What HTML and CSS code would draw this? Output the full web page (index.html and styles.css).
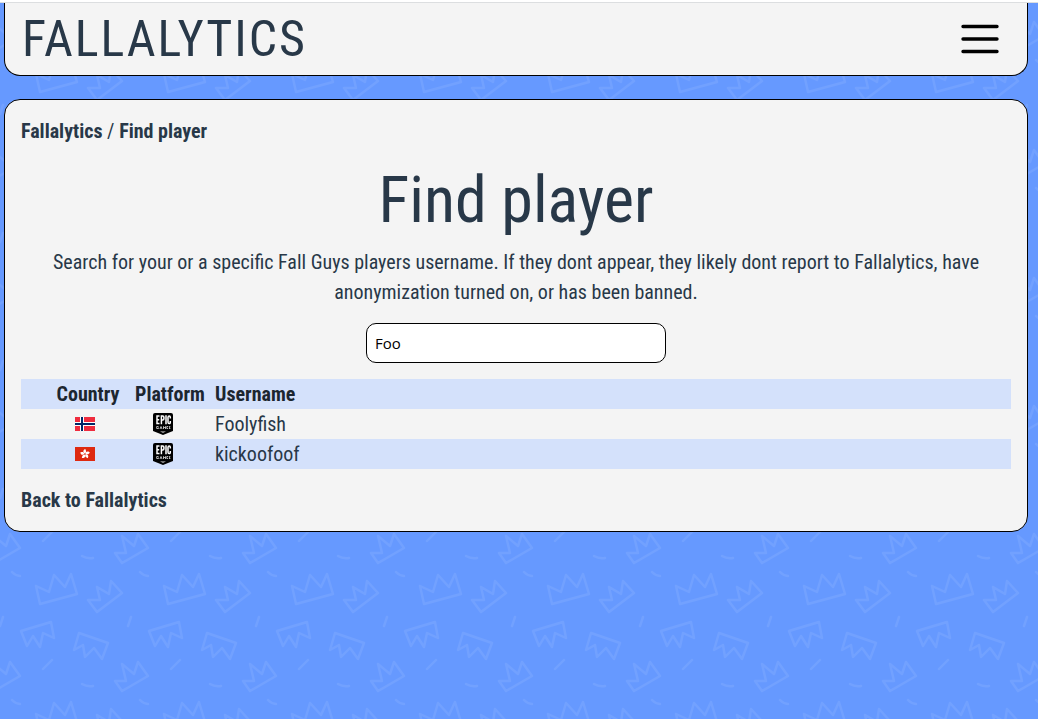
FILE: index.html
```html
<!DOCTYPE html>
<html lang="en">
<head>
  <meta charset="UTF-8">
  <meta name="viewport" content="width=device-width, initial-scale=1">
  <title>Find player - Fallalytics</title>
  <link rel="stylesheet" href="styles.css">
</head>
<body>
  <svg class="sprites" aria-hidden="true">
    <symbol id="epic" viewBox="0 0 20 22">
      <path d="M2 0h16q2 0 2 2v16l-10 4-10-4V2q0-2 2-2z" fill="#000"/>
      <path d="M6.500 3H4v7.500H6.500M4 6.700H6.200M8.400 11.200V3h1.300q1.200 0 1.200 1.300v1.400q0 1.300-1.200 1.300H8.400M13 2.300V11.200M17.300 5.500V4.300Q17.300 3 16.200 3t-1.200 1.300v4.900q0 1.300 1.200 1.300t1.100-1.300V8" fill="none" stroke="#fff" stroke-width="1.500"/>
      <path d="M5.500 13.500H3.700v2h1.800v-1M7 16l1-2.500L9 16M10.500 16v-2.500l1 1.500 1-1.500V16M15 13.500h-1.200v2H15M17.300 13.500h-1.200l1 2h-1.200" fill="none" stroke="#ccc" stroke-width=".9"/>
      <path d="M7 18.500h6l-3 1.200z" fill="#ddd"/>
    </symbol>
  </svg>

  <header class="header">
    <a class="logo" href="/">FALLALYTICS</a>
    <button class="menu" type="button" aria-label="Menu">
      <svg width="38" height="30" viewBox="0 0 38 30">
        <path d="M2 2.500h34M2 15h34M2 27.500h34" stroke="#000" stroke-width="3.400" stroke-linecap="round"/>
      </svg>
    </button>
  </header>

  <main class="content">
    <nav class="breadcrumb"><a href="/">Fallalytics</a> / <a href="/find-player">Find player</a></nav>

    <h1>Find player</h1>
    <p class="intro">Search for your or a specific Fall Guys players username. If they dont appear, they likely dont report to Fallalytics, have anonymization turned on, or has been banned.</p>
    <input class="search" type="text" value="Foo" aria-label="Username">

    <table class="players">
      <thead>
        <tr><th class="country">Country</th><th class="platform">Platform</th><th>Username</th></tr>
      </thead>
      <tbody>
        <tr>
          <td class="country">
            <svg class="flag" viewBox="0 0 20 14" role="img" aria-label="Norway">
              <path d="M0 0h20v14H0z" fill="#ef2b3d"/>
              <path d="M7 0v14M0 7h20" stroke="#fff" stroke-width="4"/>
              <path d="M7 0v14M0 7h20" stroke="#002868" stroke-width="2"/>
            </svg>
          </td>
          <td class="platform"><svg class="epic" role="img" aria-label="Epic Games"><use href="#epic"/></svg></td>
          <td>Foolyfish</td>
        </tr>
        <tr>
          <td class="country">
            <svg class="flag" viewBox="0 0 20 14" role="img" aria-label="Hong Kong">
              <path d="M0 0h20v14H0z" fill="#de2910"/>
              <g fill="#fff" transform="translate(10 7)">
                <path id="petal" d="M0-.5C-2.500-1.500-2-4.500.5-5 0-4 2.500-3 0-.5z"/>
                <use href="#petal" transform="rotate(72)"/>
                <use href="#petal" transform="rotate(144)"/>
                <use href="#petal" transform="rotate(216)"/>
                <use href="#petal" transform="rotate(288)"/>
              </g>
            </svg>
          </td>
          <td class="platform"><svg class="epic" role="img" aria-label="Epic Games"><use href="#epic"/></svg></td>
          <td>kickoofoof</td>
        </tr>
      </tbody>
    </table>

    <a class="back" href="/">Back to Fallalytics</a>
  </main>
</body>
</html>
```
FILE: styles.css
```css
* {
  box-sizing: border-box;
}

html {
  border-top: 2px solid #fff;
}

body {
  margin: 0;
  padding: 0 10px 24px 4px;
  border-top: 1px solid #dcdee0;
  color: #283848;
  font-family: "Roboto Condensed", "Liberation Sans Narrow", sans-serif;
  font-size: 20px;
  line-height: 30px;
}

html {
  background-color: #6699ff;
  background-image: url("data:image/svg+xml,%3Csvg xmlns='http://www.w3.org/2000/svg' width='128' height='128' fill='none' stroke='%23fff' stroke-opacity='.08' stroke-width='2.4' stroke-linejoin='round' stroke-linecap='round'%3E%3Cpath d='M40 44L36 26 49 32 54 15 65 27 71 14 77 34zM97 52L88 40 100 40 97 27 109 34 111 21 122 33zM21 71L51 62 54 78 43 73 40 87 33 76 27 86zM79 73L108 83 102 99 94 88 85 97 83 85 74 90zM12 12q4 4 8 4M3 57l-3 9M131 57l-3 9M52 100l-9 9M82 124q5 3 11 2'/%3E%3Cg id='e'%3E%3Cpath id='c' d='M122 131L115 121 126 121 122 104 134 114 138 102 148 116z'/%3E%3Cuse href='%23c' x='-128'/%3E%3C/g%3E%3Cuse href='%23e' y='-128'/%3E%3C/svg%3E");
  background-position: 0 46px;
}

a {
  color: inherit;
  font-weight: bold;
  text-decoration: none;
}

.sprites {
  position: absolute;
  width: 0;
  height: 0;
}

.header {
  display: flex;
  align-items: center;
  justify-content: space-between;
  height: 73px;
  padding: 0 28px 0 17px;
  border: 1px solid #000;
  border-top: 0;
  border-radius: 0 0 16px 16px;
  background: #f4f4f4;
}

.logo {
  font-size: 50px;
  font-weight: normal;
  letter-spacing: 2px;
}

.menu {
  display: flex;
  padding: 0;
  border: 0;
  background: none;
  cursor: pointer;
}

.content {
  margin-top: 23px;
  padding: 16px;
  border: 1px solid #000;
  border-radius: 16px;
  background: #f4f4f4;
}

h1 {
  margin: 17px 0 8px;
  font-size: 64px;
  font-weight: normal;
  line-height: 76px;
  text-align: center;
}

.intro {
  margin: 0 0 16px;
  text-align: center;
}

.search {
  display: block;
  width: 300px;
  height: 40px;
  margin: 0 auto 16px;
  padding: 0 8px;
  border: 1px solid #000;
  border-radius: 10px;
  background: #fff;
  color: #000;
  font-family: "Open Sans", "Noto Sans", sans-serif;
  font-size: 15px;
}

.players {
  width: 100%;
  margin-bottom: 16px;
  border-collapse: collapse;
}

.players thead tr,
.players tbody tr:nth-child(even) {
  background: #d4e1fb;
}

.players th,
.players td {
  height: 30px;
  padding: 0;
  text-align: left;
}

.players th {
  color: #1c2630;
}

.players .country {
  width: 108px;
  padding-left: 26px;
  text-align: center;
}

.players .platform {
  width: 86px;
  padding-right: 4px;
  text-align: center;
}

.players td.country {
  padding-right: 6px;
}

.players td.platform {
  padding-right: 18px;
}

.flag,
.epic {
  display: block;
  width: 20px;
  height: 14px;
  margin: 0 auto;
}

.epic {
  height: 22px;
}

.back {
  display: block;
}
```
